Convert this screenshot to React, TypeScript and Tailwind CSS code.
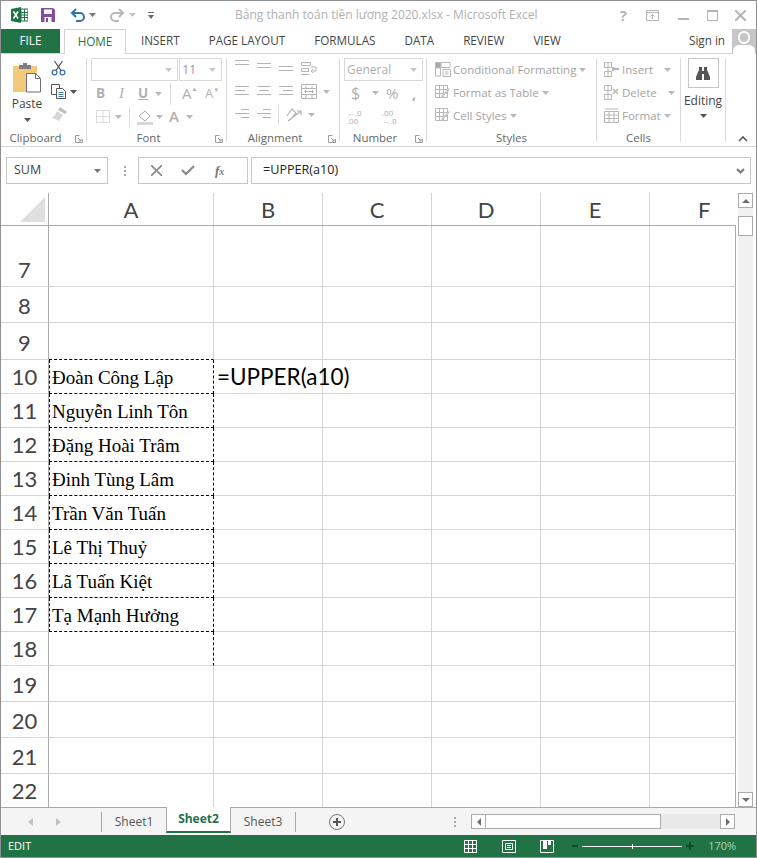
import React from 'react';

const UI = "font-['Open_Sans','Noto_Sans',sans-serif]";
const SHEET = "font-['Lato',sans-serif]";

type IconProps = { className?: string };

const Caret = ({ className = 'text-[#b9b9b9]' }: IconProps) => (
  <svg width="7" height="4" viewBox="0 0 7 4" className={className}>
    <path d="M0 0h7L3.5 4z" fill="currentColor" />
  </svg>
);

const Lines = ({ rows }: { rows: [number, number][] }) => (
  <svg width="16" height="14" viewBox="0 0 16 14" fill="none" stroke="#b4b4b4">
    {rows.map(([x, w], i) => (
      <path key={i} d={`M${x} ${1.5 + i * 4}h${w}`} />
    ))}
  </svg>
);

const Launcher = () => (
  <svg width="8" height="8" viewBox="0 0 8 8" fill="none" stroke="#9d9d9d">
    <path d="M7.5 4v3.5H.5V.5h4M3 3l3 3M6 4v2H4" />
  </svg>
);

const Sep = ({ h = 'h-[20px]' }: { h?: string }) => <div className={`w-px bg-[#dcdcdc] ${h}`} />;

const Group = ({ label, width, launcher, children }: { label: string; width: number; launcher?: boolean; children: React.ReactNode }) => (
  <div className="relative flex h-[84px] flex-col border-r border-[#dadada]" style={{ width }}>
    <div className="h-[70px] shrink-0">{children}</div>
    <div className={`flex h-[20px] shrink-0 items-center justify-center text-[11.5px] leading-none text-[#666] ${launcher ? 'pr-[16px]' : ''}`}>{label}</div>
    {launcher && (
      <div className="absolute bottom-[-1px] right-[3px]">
        <Launcher />
      </div>
    )}
  </div>
);

const ExcelLogo = () => (
  <svg width="17" height="16" viewBox="0 0 17 16">
    <path d="M0 2l10-2v16L0 14z" fill="#217346" />
    <path d="M10 2h7v12h-7z" fill="#fff" stroke="#217346" />
    <path d="M10 5.5h7M10 8h7M10 10.5h7M13.5 2v12" stroke="#217346" />
    <path d="M2.5 4.5l4.5 7M7 4.5l-4.5 7" stroke="#fff" strokeWidth="1.6" />
  </svg>
);

const SaveIcon = () => (
  <svg width="14" height="14" viewBox="0 0 14 14">
    <path d="M0 0h12l2 2v12H0z" fill="#80509f" />
    <path d="M3 1.5h8v4.5H3z" fill="#fff" />
    <path d="M3.5 9h7v5h-7z" fill="#fff" />
    <path d="M5 10h2v4H5z" fill="#80509f" />
  </svg>
);

const Undo = ({ color, flip }: { color: string; flip?: boolean }) => (
  <svg width="15" height="14" viewBox="0 0 15 14" fill="none" className={flip ? '-scale-x-100' : ''}>
    <path d="M2 5h8a3.5 3.5 0 0 1 0 8H6" stroke={color} strokeWidth="2" />
    <path d="M6 1L2 5l4 4" stroke={color} strokeWidth="2" />
  </svg>
);

const TitleBar = () => (
  <div className="flex h-[28px] items-center">
    <div className="ml-[10px]"><ExcelLogo /></div>
    <div className="ml-[13px]"><SaveIcon /></div>
    <div className="ml-[15px]"><Undo color="#2e74b5" /></div>
    <div className="ml-[4px]"><Caret className="text-[#777]" /></div>
    <div className="ml-[14px]"><Undo color="#b7b7b7" flip /></div>
    <div className="ml-[4px]"><Caret className="text-[#c4c4c4]" /></div>
    <svg width="6" height="7" viewBox="0 0 6 7" className="ml-[12px]" fill="#666">
      <path d="M0 0h6v1H0zM0 3h6L3 7z" />
    </svg>
    <div className="ml-[81px] w-[290px] whitespace-nowrap text-[12px] text-[#b1b1b1]">Bảng thanh toán tiền lương 2020.xlsx - Microsoft Excel</div>
    <div className="ml-auto flex items-center">
      <span className="text-[15px] font-bold text-[#b5b5b5]">?</span>
      <svg width="13" height="11" viewBox="0 0 13 11" fill="none" stroke="#b5b5b5" className="ml-[19px]">
        <path d="M.5.5h12v10H.5zM.5 2.5h12M6.5 9V4.5M4.5 6.5l2-2 2 2" />
      </svg>
      <div className="ml-[19px] h-[2px] w-[11px] translate-y-[4px] bg-[#b5b5b5]" />
      <div className="ml-[18px] h-[11px] w-[11px] border border-t-2 border-[#b5b5b5]" />
      <svg width="11" height="11" viewBox="0 0 11 11" stroke="#b5b5b5" strokeWidth="2" className="ml-[17px] mr-[10px]">
        <path d="M0 0l11 11M11 0L0 11" />
      </svg>
    </div>
  </div>
);

const TabBar = () => (
  <div className="relative flex h-[25px] items-stretch border-b border-[#d4d4d4] text-[11.7px] text-[#444]">
    <div className="flex w-[59px] items-center justify-center bg-[#217346] text-white">FILE</div>
    <div className="relative z-10 ml-[4px] mb-[-1px] flex w-[62px] items-center justify-center border border-b-0 border-[#d4d4d4] bg-white text-[#217346]">HOME</div>
    <div className="ml-[15px] flex items-center gap-[29px]">
      {['INSERT', 'PAGE LAYOUT', 'FORMULAS', 'DATA', 'REVIEW', 'VIEW'].map(t => (
        <span key={t} className="whitespace-nowrap">{t}</span>
      ))}
    </div>
    <div className="ml-auto flex items-center">
      <span className="text-[#444]">Sign in</span>
      <div className="relative ml-[7px] h-[25px] w-[24px] overflow-hidden bg-[#c6c6c6]">
        <div className="absolute left-[6px] top-[2px] h-[13px] w-[12px] rounded-full border-2 border-white" />
        <div className="absolute left-[1px] top-[16px] h-[12px] w-[22px] rounded-t-[6px] bg-white" />
      </div>
    </div>
  </div>
);

const Clipboard = () => (
  <div className="flex">
    <div className="ml-[10px] flex w-[32px] flex-col items-center">
      <svg width="30" height="31" viewBox="0 0 30 31" className="mt-[4px]">
        <path d="M1 4h24v26H1z" fill="#f0c97b" />
        <path d="M7 3h12v4H7zM11 1h4v3h-4z" fill="#7f7f7f" />
        <path d="M14.5 11.5h9l5 5v13.5h-14z" fill="#fff" stroke="#6f6f6f" />
        <path d="M23.5 11.5v5h5" fill="none" stroke="#6f6f6f" />
      </svg>
      <span className="mt-[3px] text-[12px] leading-[16px] text-[#444]">Paste</span>
      <div className="mt-[6px]"><Caret className="text-[#555]" /></div>
    </div>
    <div className="ml-[8px] mt-[2px] flex flex-col gap-[8px]">
      <svg width="15" height="16" viewBox="0 0 15 16" fill="none" stroke="#3f75ac" strokeWidth="1.3">
        <circle cx="3.5" cy="12.5" r="2.4" />
        <circle cx="11.5" cy="12.5" r="2.4" />
        <path d="M5 10.5L11.5 1M10 10.5L3.5 1" stroke="#555" />
      </svg>
      <div className="flex items-center gap-[4px]">
        <svg width="15" height="15" viewBox="0 0 15 15" fill="#fff" stroke="#555">
          <path d="M.5.5h8v10h-8z" />
          <path d="M5.5 4.5h6l3 3v7h-9z" />
          <path d="M7.5 8.5h5M7.5 10.5h5M7.5 12.5h5" stroke="#3f75ac" />
        </svg>
        <Caret className="text-[#555]" />
      </div>
      <svg width="16" height="14" viewBox="0 0 16 14">
        <path d="M9 0l7 5-2 2-7-4z" fill="#bdbdbd" />
        <path d="M6 4l6 4-4 6-8-4c3 0 4-2 6-6z" fill="#d6d6d6" />
      </svg>
    </div>
  </div>
);

const Font = () => (
  <div className="ml-[4px] flex w-[131px] flex-col">
    <div className="flex h-[23px]">
      <div className="flex w-[88px] items-center justify-end border border-[#d9d9d9] pr-[5px]"><Caret className="text-[#c6c6c6]" /></div>
      <div className="ml-[1px] flex w-[43px] items-center justify-between border border-[#d9d9d9] px-[2px] pr-[5px] text-[12px] text-[#a98bb7]">11<Caret className="text-[#c6c6c6]" /></div>
    </div>
    <div className="mt-[1px] flex h-[23px] items-center text-[#b0b0b0]">
      <span className="ml-[5px] w-[23px] text-[13.5px] font-bold">B</span>
      <span className="w-[19px] font-['Liberation_Serif',serif] text-[15px] italic">I</span>
      <span className="w-[17px] text-[13.5px] font-bold underline">U</span>
      <Caret />
      <div className="ml-[8px]"><Sep h="h-[22px]" /></div>
      <span className="ml-[11px] flex w-[21px] items-start text-[15px] leading-none">A<span className="text-[6px]">▲</span></span>
      <span className="ml-[2px] flex items-start text-[13px] leading-none">A<span className="text-[6px]">▼</span></span>
    </div>
    <div className="flex h-[23px] items-center text-[#b0b0b0]">
      <svg width="14" height="13" viewBox="0 0 14 13" fill="none" stroke="#bdbdbd" strokeDasharray="1 1" className="ml-[5px]">
        <path d="M.5.5h13v12H.5zM.5 6.5h13M7 .5v12" />
      </svg>
      <div className="ml-[5px]"><Caret /></div>
      <div className="ml-[7px]"><Sep /></div>
      <svg width="16" height="16" viewBox="0 0 16 16" className="ml-[7px]">
        <path d="M2 7l6-5 5 5-5 5z" fill="#fff" stroke="#aaa" />
        <path d="M0 13h16v3H0z" fill="#d8d8d8" />
      </svg>
      <div className="ml-[3px]"><Caret /></div>
      <span className="ml-[6px] w-[17px] text-[15px] font-semibold">A</span>
      <Caret />
    </div>
  </div>
);

const Alignment = () => (
  <div className="ml-[7px] flex flex-col">
    <div className="flex h-[22px] items-center gap-[6px]">
      <div className="-mt-[6px]"><Lines rows={[[1, 14], [1, 14]]} /></div>
      <div className="-mt-[1px]"><Lines rows={[[1, 14], [1, 14]]} /></div>
      <div className="mt-[5px]"><Lines rows={[[1, 14], [1, 14]]} /></div>
      <svg width="16" height="15" viewBox="0 0 16 15" fill="none" stroke="#b4b4b4" className="ml-[1px]">
        <path d="M.5.5h9v3h-9zM.5 6.5h7v3h-7zM.5 12.5h8M10 5h5v4h-4M12 7l-2 2 2 2" />
      </svg>
    </div>
    <div className="flex h-[23px] items-center gap-[6px]">
      <Lines rows={[[1, 14], [1, 10], [1, 14]]} />
      <Lines rows={[[1, 14], [3, 10], [1, 14]]} />
      <Lines rows={[[1, 14], [5, 10], [1, 14]]} />
      <svg width="16" height="15" viewBox="0 0 16 15" fill="none" stroke="#b4b4b4" className="ml-[1px]">
        <path d="M.5.5h15v14H.5zM.5 4.5h15M.5 10.5h15M5 2v2M11 2v2M5 11v3M11 11v3M4 7.5h8M5 6L3.5 7.5 5 9M11 6l1.5 1.5L11 9" />
      </svg>
      <Caret />
    </div>
    <div className="flex h-[23px] items-center gap-[6px]">
      <Lines rows={[[7, 8], [1, 14], [7, 8]]} />
      <Lines rows={[[7, 8], [1, 14], [7, 8]]} />
      <Sep />
      <svg width="16" height="14" viewBox="0 0 16 14" fill="none" stroke="#b4b4b4" strokeWidth="1.2" className="ml-[1px]">
        <path d="M1 8l5-7 4 4-5 6M2 13L15 3M11 3h4v4" />
      </svg>
      <Caret />
    </div>
  </div>
);

const NumberGroup = () => (
  <div className="ml-[4px] flex flex-col text-[#b0b0b0]">
    <div className="flex h-[23px] w-[79px] items-center justify-between border border-[#d9d9d9] pl-[2px] pr-[5px] text-[12px]">General<Caret className="text-[#c6c6c6]" /></div>
    <div className="flex h-[24px] items-center">
      <span className="ml-[7px] w-[21px] text-[16px]">$</span>
      <Caret />
      <span className="ml-[7px] w-[26px] text-[15px]">%</span>
      <span className="text-[14px] font-bold">,</span>
    </div>
    <div className="flex h-[23px] items-center text-[8px] leading-[8px]">
      <span className="ml-[3px] w-[35px] whitespace-pre">{'←.0\n.00'}</span>
      <span className="w-[20px] whitespace-pre">{'.00\n→.0'}</span>
    </div>
  </div>
);

const StyleRow = ({ label, icon, caretGap = 'ml-[3px]' }: { label: string; icon: React.ReactNode; caretGap?: string }) => (
  <div className="flex h-[23px] items-center text-[11.5px] text-[#a4a4a4]">
    <div className="flex w-[18px] justify-start">{icon}</div>
    <span className="whitespace-nowrap">{label}</span>
    <div className={caretGap}><Caret /></div>
  </div>
);

const TableIcon = () => (
  <svg width="16" height="15" viewBox="0 0 16 15" fill="none" stroke="#b7b7b7">
    <path d="M.5.5h12v12H.5zM.5 4.5h12M.5 8.5h12M4.5.5v12M8.5.5v12" />
    <path d="M7 13l8-9-1-1-8 8z" fill="#c8c8c8" stroke="none" />
  </svg>
);

const CondIcon = () => (
  <svg width="16" height="15" viewBox="0 0 16 15" fill="none" stroke="#b7b7b7">
    <path d="M.5.5h5v5h-5z" fill="#aaa" />
    <path d="M6 .5h9v5H6zM.5 6h5v8h-5z" />
    <path d="M8 7.5h7.5v7H8zM10 10h3.5M10 12h3.5" fill="#fff" />
  </svg>
);

const CellsIcon = ({ kind }: { kind: 'insert' | 'delete' | 'format' }) => (
  <svg width="15" height="15" viewBox="0 0 15 15" fill="none" stroke="#b7b7b7">
    {kind !== 'format' && <path d="M.5.5h7v5h-7zM.5 9.5h7v5h-7zM4 .5v14" />}
    {kind === 'insert' && <path d="M9 7h6M9 5v4" strokeWidth="2" />}
    {kind === 'delete' && <path d="M9 4l5 5M14 4L9 9" strokeWidth="1.4" />}
    {kind === 'format' && <path d="M.5 3.5h14v11H.5zM.5 7h14M.5 10.5h14M5 3.5v11M10 3.5v11M1 1h13" />}
  </svg>
);

const Binoculars = () => (
  <svg width="14" height="13" viewBox="0 0 14 13" fill="#555">
    <path d="M3 0h3v4h2V0h3v3l1 2 2 5v3H8V7H6v6H0v-3l2-5 1-2z" />
  </svg>
);

const Ribbon = () => (
  <div className="flex h-[93px] items-start border-b border-[#d4d4d4] pt-[4px]">
    <Group label="Clipboard" width={86} launcher><Clipboard /></Group>
    <Group label="Font" width={140} launcher><Font /></Group>
    <Group label="Alignment" width={113} launcher><Alignment /></Group>
    <Group label="Number" width={87} launcher><NumberGroup /></Group>
    <Group label="Styles" width={170}>
      <div className="ml-[8px]">
        <StyleRow label="Conditional Formatting" icon={<CondIcon />} />
        <StyleRow label="Format as Table" icon={<TableIcon />} />
        <StyleRow label="Cell Styles" icon={<TableIcon />} />
      </div>
    </Group>
    <Group label="Cells" width={84}>
      <div className="ml-[7px]">
        <StyleRow label="Insert" icon={<CellsIcon kind="insert" />} caretGap="ml-[11px]" />
        <StyleRow label="Delete" icon={<CellsIcon kind="delete" />} caretGap="ml-[11px]" />
        <StyleRow label="Format" icon={<CellsIcon kind="format" />} />
      </div>
    </Group>
    <Group label="" width={45}>
      <div className="flex flex-col items-center">
        <div className="flex h-[30px] w-[31px] items-center justify-center border border-[#c6c6c6]"><Binoculars /></div>
        <span className="mt-[3px] text-[12px] leading-[20px] text-[#444]">Editing</span>
        <div className="mt-[3px]"><Caret className="text-[#555]" /></div>
      </div>
    </Group>
    <div className="ml-[12px] mt-[78px]">
      <svg width="10" height="6" viewBox="0 0 10 6" fill="none" stroke="#555" strokeWidth="1.6"><path d="M1 5l4-4 4 4" /></svg>
    </div>
  </div>
);

const FormulaBar = () => (
  <div className="mt-[10px] flex h-[27px] items-stretch">
    <div className="ml-[5px] flex w-[102px] items-center justify-between border border-[#c6c6c6] pl-[7px] pr-[6px] text-[12.5px] text-[#444]">
      SUM
      <Caret className="text-[#777]" />
    </div>
    <div className="ml-[15px] flex w-[3px] flex-col items-center justify-center gap-[2px]">
      <div className="h-[2px] w-[2px] bg-[#aaa]" />
      <div className="h-[2px] w-[2px] bg-[#aaa]" />
      <div className="h-[2px] w-[2px] bg-[#aaa]" />
    </div>
    <div className="ml-[12px] flex w-[110px] items-center border border-[#c6c6c6]">
      <svg width="11" height="11" viewBox="0 0 11 11" stroke="#8a8a8a" strokeWidth="1.6" className="ml-[12px]"><path d="M0 0l11 11M11 0L0 11" /></svg>
      <svg width="14" height="11" viewBox="0 0 14 11" fill="none" stroke="#8a8a8a" strokeWidth="2.2" className="ml-[19px]"><path d="M1 5l4 4 8-8" /></svg>
      <span className="ml-[20px] font-['Liberation_Serif',serif] text-[13px] font-bold italic text-[#777]">f<span className="text-[10px]">x</span></span>
    </div>
    <div className="ml-[3px] flex w-[500px] items-center justify-between border border-[#c6c6c6] pl-[11px] pr-[5px] text-[12.6px] text-[#222]">
      =UPPER(a10)
      <svg width="9" height="6" viewBox="0 0 9 6" fill="none" stroke="#777" strokeWidth="2"><path d="M1 1l3.5 3.5L8 1" /></svg>
    </div>
  </div>
);

const COLS = ['A', 'B', 'C', 'D', 'E', 'F'];
const COL_W = ['w-[165px]', 'w-[109px]', 'w-[109px]', 'w-[109px]', 'w-[109px]', 'w-[86px]'];

const ROWS: { n: number; h: string; name?: string }[] = [
  { n: 7, h: 'h-[61px]' },
  { n: 8, h: 'h-[36px]' },
  { n: 9, h: 'h-[37px]' },
  { n: 10, h: 'h-[34px]', name: 'Đoàn Công Lập' },
  { n: 11, h: 'h-[34px]', name: 'Nguyễn Linh Tôn' },
  { n: 12, h: 'h-[34px]', name: 'Đặng Hoài Trâm' },
  { n: 13, h: 'h-[34px]', name: 'Đinh Tùng Lâm' },
  { n: 14, h: 'h-[34px]', name: 'Trần Văn Tuấn' },
  { n: 15, h: 'h-[34px]', name: 'Lê Thị Thuỷ' },
  { n: 16, h: 'h-[34px]', name: 'Lã Tuấn Kiệt' },
  { n: 17, h: 'h-[34px]', name: 'Tạ Mạnh Hưởng' },
  { n: 18, h: 'h-[34px]' },
  { n: 19, h: 'h-[36px]' },
  { n: 20, h: 'h-[36px]' },
  { n: 21, h: 'h-[36px]' },
  { n: 22, h: 'h-[33px]' },
];

const SheetRow = ({ n, h, name }: { n: number; h: string; name?: string }) => {
  const last = n === 22;
  const copied = n >= 10 && n <= 17;
  const marqueeRight = n >= 10 && n <= 18;
  const aCell = copied
    ? 'border-l border-r border-b border-dashed border-l-black border-r-black border-b-black'
    : marqueeRight
      ? 'border-r border-b border-r-black border-b-[#d4d4d4] [border-right-style:dashed]'
      : n === 9
        ? 'border-r border-b border-r-[#d4d4d4] border-b-black [border-bottom-style:dashed]'
        : last
          ? 'border-r border-r-[#d4d4d4]'
          : 'border-r border-b border-[#d4d4d4]';
  return (
    <div className={`flex ${h} ${SHEET}`}>
      <div className={`flex w-[48px] items-end justify-center border-r border-[#a9a9a9] text-[22px] leading-[33px] text-[#444] ${last ? '' : 'border-b border-b-[#d4d4d4]'}`}>{n}</div>
      {COLS.map((c, i) => (
        <div
          key={c}
          className={`${COL_W[i]} ${i === 0 ? `${aCell} flex items-center whitespace-nowrap pl-[2px] pt-[3px] font-['Liberation_Serif',serif] text-[19px] text-black` : `border-r ${last ? '' : 'border-b'} border-[#d4d4d4]`} ${i === 5 ? 'border-r-[#a9a9a9]' : ''} ${i === 1 && n === 10 ? 'relative' : ''}`}
        >
          {i === 0 && name}
          {i === 1 && n === 10 && (
            <span className="absolute left-[3px] top-0 whitespace-nowrap text-[22.5px] leading-[34px] text-black">=UPPER(a10)</span>
          )}
        </div>
      ))}
    </div>
  );
};

const ScrollBtn = ({ dir }: { dir: 'up' | 'down' | 'left' | 'right' }) => (
  <div className="flex h-[15px] w-[15px] items-center justify-center border border-[#ababab] bg-white">
    <svg width="8" height="8" viewBox="0 0 8 8" fill="#6f6f6f">
      {dir === 'up' && <path d="M4 2l4 4H0z" />}
      {dir === 'down' && <path d="M4 6l4-4H0z" />}
      {dir === 'left' && <path d="M2 4l4-4v8z" />}
      {dir === 'right' && <path d="M6 4L2 0v8z" />}
    </svg>
  </div>
);

const Sheet = () => (
  <div className="flex h-[614px] flex-1 items-stretch">
    <div className="w-[735px]">
      <div className={`flex h-[33px] border-b border-[#a9a9a9] ${SHEET} text-[22px] text-[#444]`}>
        <div className="relative w-[48px] border-r border-[#a9a9a9]">
          <svg width="26" height="26" viewBox="0 0 26 26" className="absolute left-[19px] top-[4px]"><path d="M25 0v25H0z" fill="#dfdfdf" /></svg>
        </div>
        {COLS.map((c, i) => (
          <div key={c} className={`${COL_W[i]} flex items-center border-r border-[#d4d4d4] ${i === 5 ? 'border-r-0 pl-[48px]' : 'justify-center'}`}>{c}</div>
        ))}
      </div>
      {ROWS.map(r => <SheetRow key={r.n} {...r} />)}
    </div>
    <div className="ml-[2px] flex w-[15px] flex-col">
      <ScrollBtn dir="up" />
      <div className="flex-1 bg-[#f1f1f1] pt-[8px]">
        <div className="h-[20px] border border-[#ababab] bg-white" />
      </div>
      <ScrollBtn dir="down" />
    </div>
  </div>
);

const SheetTab = ({ name }: { name: string }) => (
  <div className="flex h-[23px] w-[64px] items-center justify-center text-[12px] text-[#555]">{name}</div>
);

const SheetBar = () => (
  <div className="flex h-[28px] items-center border-t border-[#a9a9a9] bg-[#f4f4f4]">
    <svg width="5" height="8" viewBox="0 0 5 8" fill="#c2c2c2" className="ml-[27px]"><path d="M0 4l5-4v8z" /></svg>
    <svg width="5" height="8" viewBox="0 0 5 8" fill="#c2c2c2" className="ml-[23px]"><path d="M5 4L0 0v8z" /></svg>
    <div className="ml-[40px] h-[20px] w-px bg-[#a9a9a9]" />
    <SheetTab name="Sheet1" />
    <div className="relative -top-[1px] flex h-[26px] w-[65px] items-center justify-center self-start border-x border-b-2 border-x-[#a9a9a9] border-b-[#217346] bg-white text-[12px] font-bold text-[#217346]">Sheet2</div>
    <SheetTab name="Sheet3" />
    <div className="h-[20px] w-px bg-[#a9a9a9]" />
    <div className="ml-[33px] flex h-[16px] w-[16px] items-center justify-center rounded-full border border-[#777] text-[#555]">
      <svg width="8" height="8" viewBox="0 0 8 8" stroke="#555" strokeWidth="2"><path d="M4 0v8M0 4h8" /></svg>
    </div>
    <div className="ml-[109px] flex flex-col gap-[2px]">
      <div className="h-[2px] w-[2px] bg-[#aaa]" />
      <div className="h-[2px] w-[2px] bg-[#aaa]" />
      <div className="h-[2px] w-[2px] bg-[#aaa]" />
    </div>
    <div className="ml-[15px] flex w-[264px]">
      <ScrollBtn dir="left" />
      <div className="h-[15px] w-[175px] border border-l-0 border-[#ababab] bg-white" />
      <div className="h-[15px] flex-1 bg-[#e9e9e9]" />
      <ScrollBtn dir="right" />
    </div>
  </div>
);

const StatusBar = () => (
  <div className="flex h-[22px] items-center bg-[#217346] text-[11px] text-white">
    <span className="ml-[7px]">EDIT</span>
    <svg width="14" height="13" viewBox="0 0 14 13" fill="none" stroke="#fff" className="ml-[433px]">
      <path d="M.5.5h12v12H.5zM.5 4.5h12M.5 8.5h12M4.5.5v12M8.5.5v12" />
    </svg>
    <svg width="14" height="13" viewBox="0 0 14 13" fill="none" stroke="#fff" className="ml-[24px]">
      <path d="M.5.5h13v12H.5zM3.5 3.5h7v6h-7zM5 5.5h4M5 7.5h4" />
    </svg>
    <svg width="14" height="13" viewBox="0 0 14 13" fill="none" stroke="#fff" className="ml-[24px]">
      <path d="M.5.5h13v12H.5z" />
      <path d="M3 1h4v8H3zM8 1h3v4H8z" fill="#fff" stroke="none" />
    </svg>
    <div className="ml-[18px] h-[2px] w-[6px] bg-[#0e4a26]" />
    <div className="relative ml-[4px] h-px w-[100px] bg-white">
      <div className="absolute left-[50px] top-[-2px] h-[5px] w-px bg-white" />
    </div>
    <svg width="8" height="8" viewBox="0 0 8 8" stroke="#0e4a26" strokeWidth="2" className="ml-[4px]"><path d="M4 0v8M0 4h8" /></svg>
    <span className="ml-[14px] text-[#a6d5b6]">170%</span>
  </div>
);

export default function App() {
  return (
    <div className={`${UI} flex h-[858px] w-[757px] flex-col overflow-hidden border border-[#8f8f8f] bg-white`}>
      <TitleBar />
      <TabBar />
      <Ribbon />
      <FormulaBar />
      <div className="h-[9px]" />
      <Sheet />
      <SheetBar />
      <StatusBar />
    </div>
  );
}
